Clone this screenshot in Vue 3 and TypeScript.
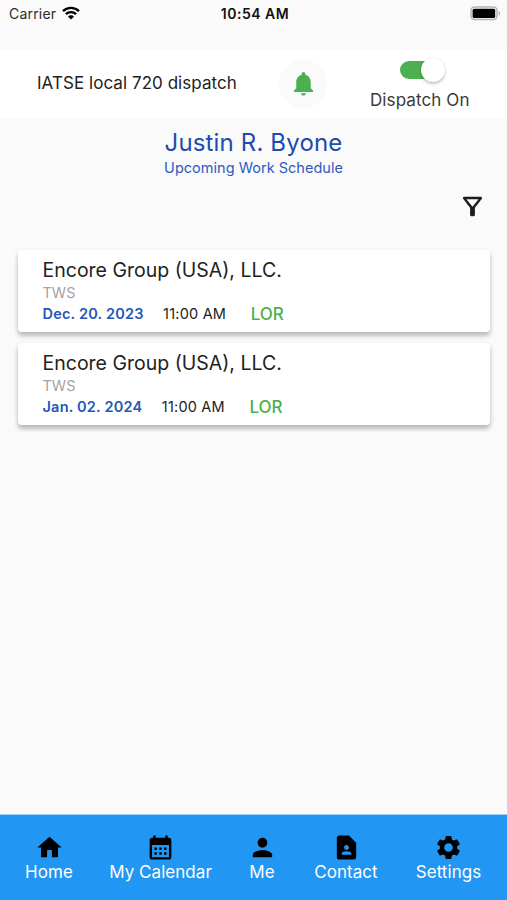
<script setup lang="ts">
interface Job {
  company: string
  code: string
  date: string
  time: string
  status: string
}
interface Tab {
  key: string
  label: string
  path: string
}

const jobs: Job[] = [
  { company: 'Encore Group (USA), LLC.', code: 'TWS', date: 'Dec. 20. 2023', time: '11:00 AM', status: 'LOR' },
  { company: 'Encore Group (USA), LLC.', code: 'TWS', date: 'Jan. 02. 2024', time: '11:00 AM', status: 'LOR' },
]

const tabs: Tab[] = [
  { key: 'home', label: 'Home', path: 'M10 20v-6h4v6h5v-8h3L12 3 2 12h3v8z' },
  {
    key: 'calendar',
    label: 'My Calendar',
    path: 'M19 4h-1V2h-2v2H8V2H6v2H5c-1.11 0-1.99.9-1.99 2L3 20c0 1.1.89 2 2 2h14c1.1 0 2-.9 2-2V6c0-1.1-.9-2-2-2zm0 16H5V10h14v10zM9 14H7v-2h2v2zm4 0h-2v-2h2v2zm4 0h-2v-2h2v2zm-8 4H7v-2h2v2zm4 0h-2v-2h2v2zm4 0h-2v-2h2v2z',
  },
  { key: 'me', label: 'Me', path: 'M12 12c2.21 0 4-1.79 4-4s-1.79-4-4-4-4 1.79-4 4 1.79 4 4 4zm0 2c-2.67 0-8 1.34-8 4v2h16v-2c0-2.66-5.33-4-8-4z' },
  {
    key: 'contact',
    label: 'Contact',
    path: 'M14 2H6c-1.1 0-1.99.9-1.99 2L4 20c0 1.1.89 2 1.99 2H18c1.1 0 2-.9 2-2V8l-6-6zm-2 8c1.1 0 2 .9 2 2s-.9 2-2 2-2-.9-2-2 .9-2 2-2zm4 8H8v-.57c0-.81.48-1.53 1.22-1.85.85-.37 1.79-.58 2.78-.58.99 0 1.93.21 2.78.58.74.32 1.22 1.04 1.22 1.85V18z',
  },
  {
    key: 'settings',
    label: 'Settings',
    path: 'M19.14 12.94c.04-.3.06-.61.06-.94 0-.32-.02-.64-.07-.94l2.03-1.58c.18-.14.23-.41.12-.61l-1.92-3.32c-.12-.22-.37-.29-.59-.22l-2.39.96c-.5-.38-1.03-.7-1.62-.94l-.36-2.54c-.04-.24-.24-.41-.48-.41h-3.84c-.24 0-.43.17-.47.41l-.36 2.54c-.59.24-1.13.57-1.62.94l-2.39-.96c-.22-.08-.47 0-.59.22L2.74 8.87c-.12.21-.08.47.12.61l2.03 1.58c-.05.3-.09.63-.09.94s.02.64.07.94l-2.03 1.58c-.18.14-.23.41-.12.61l1.92 3.32c.12.22.37.29.59.22l2.39-.96c.5.38 1.03.7 1.62.94l.36 2.54c.05.24.24.41.48.41h3.84c.24 0 .44-.17.47-.41l.36-2.54c.59-.24 1.13-.56 1.62-.94l2.39.96c.22.08.47 0 .59-.22l1.92-3.32c.12-.22.07-.47-.12-.61l-2.01-1.58zM12 15.6c-1.98 0-3.6-1.62-3.6-3.6s1.62-3.6 3.6-3.6 3.6 1.62 3.6 3.6-1.62 3.6-3.6 3.6z',
  },
]
</script>

<template>
  <div class="screen">
    <div class="status">
      <div class="carrier">
        <span>Carrier</span>
        <svg class="wifi" viewBox="0 0 18 14">
          <path d="M1 5.2a11.4 11.4 0 0 1 16 0M3.9 8.2a7.2 7.2 0 0 1 10.2 0" />
          <path class="dot" d="M9 13.6 5.9 10.5a4.4 4.4 0 0 1 6.2 0z" />
        </svg>
      </div>
      <span class="clock">10:54 AM</span>
      <svg class="battery" viewBox="0 0 31 15">
        <rect class="case" x="1" y="1" width="26" height="12.5" rx="3.5" />
        <rect x="2.6" y="2.7" width="22.6" height="9.2" rx="1.5" />
        <path class="cap" d="M28.6 5c2 .6 2 4 0 4.6z" />
      </svg>
    </div>

    <header class="header">
      <span class="title">IATSE local 720 dispatch</span>
      <div class="bell">
        <svg viewBox="0 0 24 24">
          <path d="M12 22c1.1 0 2-.9 2-2h-4c0 1.1.89 2 2 2zm6-6v-5c0-3.07-1.64-5.64-4.5-6.32V4c0-.83-.67-1.5-1.5-1.5s-1.5.67-1.5 1.5v.68C7.63 5.36 6 7.92 6 11v5l-2 2v1h16v-1l-2-2z" />
        </svg>
      </div>
      <div class="dispatch">
        <div class="switch"><div class="thumb"></div></div>
        <span class="dispatch-label">Dispatch On</span>
      </div>
    </header>

    <main class="content">
      <h1 class="name">Justin R. Byone</h1>
      <p class="subtitle">Upcoming Work Schedule</p>
      <div class="tools">
        <svg class="filter" viewBox="0 0 24 24">
          <path d="M7 6h10l-5.01 6.3L7 6zm-2.75-.39C6.27 8.2 10 13 10 13v6c0 .55.45 1 1 1h2c.55 0 1-.45 1-1v-6s3.72-4.8 5.74-7.39c.51-.66.04-1.61-.79-1.61H5.04c-.83 0-1.3.95-.79 1.61z" />
        </svg>
      </div>
      <section class="list">
        <article v-for="job in jobs" :key="job.date" class="card">
          <div class="company"><span>{{ job.company }}</span></div>
          <div class="code"><span>{{ job.code }}</span></div>
          <div class="meta">
            <span class="date">{{ job.date }}</span>
            <span class="time">{{ job.time }}</span>
            <span class="state">{{ job.status }}</span>
          </div>
        </article>
      </section>
    </main>

    <nav class="nav">
      <div v-for="tab in tabs" :key="tab.key" class="tab" :class="tab.key">
        <svg viewBox="0 0 24 24"><path fill-rule="evenodd" :d="tab.path" /></svg>
        <span>{{ tab.label }}</span>
      </div>
    </nav>
  </div>
</template>

<style>
body {
  margin: 0;
  background: #fafafa;
}
</style>

<style scoped>
.screen {
  width: 507px;
  height: 900px;
  display: flex;
  flex-direction: column;
  overflow: hidden;
  background: #fafafa;
  color: #222;
  font-family: Inter, "Liberation Sans", sans-serif;
  white-space: nowrap;
}
.status {
  height: 50px;
  box-sizing: border-box;
  padding: 4px 6px 0 9px;
  display: grid;
  grid-template-columns: 1fr auto 1fr;
  align-items: start;
  line-height: 20px;
}
.carrier {
  display: flex;
  gap: 6px;
  font-size: 14px;
  letter-spacing: 0.2px;
  color: #2c2c2c;
}
.wifi {
  width: 18px;
  height: 14px;
  margin-top: 2px;
  fill: none;
  stroke: #000;
  stroke-width: 2.4;
}
.wifi .dot {
  fill: #000;
  stroke: none;
}
.clock {
  font-size: 14px;
  font-weight: 600;
  letter-spacing: 0.5px;
  color: #111;
}
.battery {
  width: 31px;
  height: 15px;
  margin-top: 2px;
  justify-self: end;
}
.battery .case {
  fill: #fafafa;
  stroke: #b4b4b4;
  stroke-width: 1.5;
}
.battery .cap {
  fill: #b0b0b0;
}
.header {
  height: 69px;
  flex: none;
  display: flex;
  background: #fff;
}
.title {
  width: 242px;
  box-sizing: border-box;
  padding-left: 37px;
  line-height: 66px;
  font-size: 17px;
  letter-spacing: 0.05px;
}
.bell {
  width: 48px;
  height: 48px;
  margin: 10px 0 0 37px;
  border-radius: 50%;
  background: #fafafa;
  display: flex;
  align-items: center;
  justify-content: center;
}
.bell svg {
  width: 29px;
  height: 29px;
  margin-top: -1px;
  fill: #4caf50;
}
.dispatch {
  width: 100px;
  margin-left: 43px;
  display: flex;
  flex-direction: column;
}
.switch {
  width: 41px;
  height: 18px;
  margin: 11px 0 0 30px;
  border-radius: 9px;
  background: #4caf50;
  display: flex;
  align-items: center;
  justify-content: flex-end;
}
.thumb {
  flex: none;
  width: 24px;
  height: 24px;
  margin-right: -3.5px;
  border-radius: 50%;
  background: #fff;
  box-shadow: 0 2px 3px rgba(0, 0, 0, 0.22), 0 0 2px rgba(0, 0, 0, 0.12);
}
.dispatch-label {
  margin-top: 11px;
  line-height: 20px;
  font-size: 17px;
  letter-spacing: 0.1px;
  color: #3a3a3a;
}
.content {
  flex: 1;
  display: flex;
  flex-direction: column;
}
.name {
  margin: 9px 0 0;
  text-align: center;
  font-size: 24px;
  font-weight: 400;
  line-height: 30px;
  letter-spacing: 0.15px;
  color: #1c4cb0;
}
.subtitle {
  margin: 0;
  text-align: center;
  font-size: 14.5px;
  line-height: 20px;
  letter-spacing: 0.02px;
  color: #2d5bc0;
}
.tools {
  height: 55px;
  padding: 14px 20px 0 0;
  display: flex;
  justify-content: flex-end;
}
.filter {
  width: 29px;
  height: 29px;
  fill: #1c1c1c;
}
.list {
  padding: 3px 17px 0 18px;
  display: flex;
  flex-direction: column;
  gap: 10.5px;
}
.card {
  height: 82px;
  box-sizing: border-box;
  padding: 7px 24.5px 0;
  border-radius: 4px;
  background: #fff;
  box-shadow: 0 4px 4px rgba(0, 0, 0, 0.2), 0 2px 6px rgba(0, 0, 0, 0.1);
}
.company {
  line-height: 26px;
  font-size: 19.5px;
  letter-spacing: 0;
}
.code {
  margin-top: 1px;
  line-height: 18px;
  font-size: 14.5px;
  color: #a3a3a3;
}
.meta {
  display: flex;
  align-items: center;
  line-height: 24px;
}
.date {
  font-size: 14.5px;
  font-weight: 600;
  letter-spacing: 0.2px;
  color: #2456b8;
}
.time {
  margin-left: 19.5px;
  font-size: 14.5px;
  letter-spacing: 0.2px;
}
.state {
  margin-left: 24.5px;
  font-size: 17px;
  font-weight: 500;
  color: #4caf50;
}
.nav {
  height: 86px;
  flex: none;
  box-sizing: border-box;
  border-top: 1px solid #9bd0f8;
  display: flex;
  background: #2196f3;
}
.tab {
  padding-top: 17.5px;
  display: flex;
  flex-direction: column;
  align-items: center;
}
.tab svg {
  width: 29px;
  height: 29px;
  fill: #000;
}
.tab span {
  margin-top: 0.5px;
  line-height: 20px;
  font-size: 17px;
  letter-spacing: 0.05px;
  color: #fff;
}
.home {
  width: 98px;
}
.calendar {
  width: 125px;
}
.me {
  width: 78px;
}
.contact {
  width: 90px;
}
.settings {
  width: 115px;
}
</style>
